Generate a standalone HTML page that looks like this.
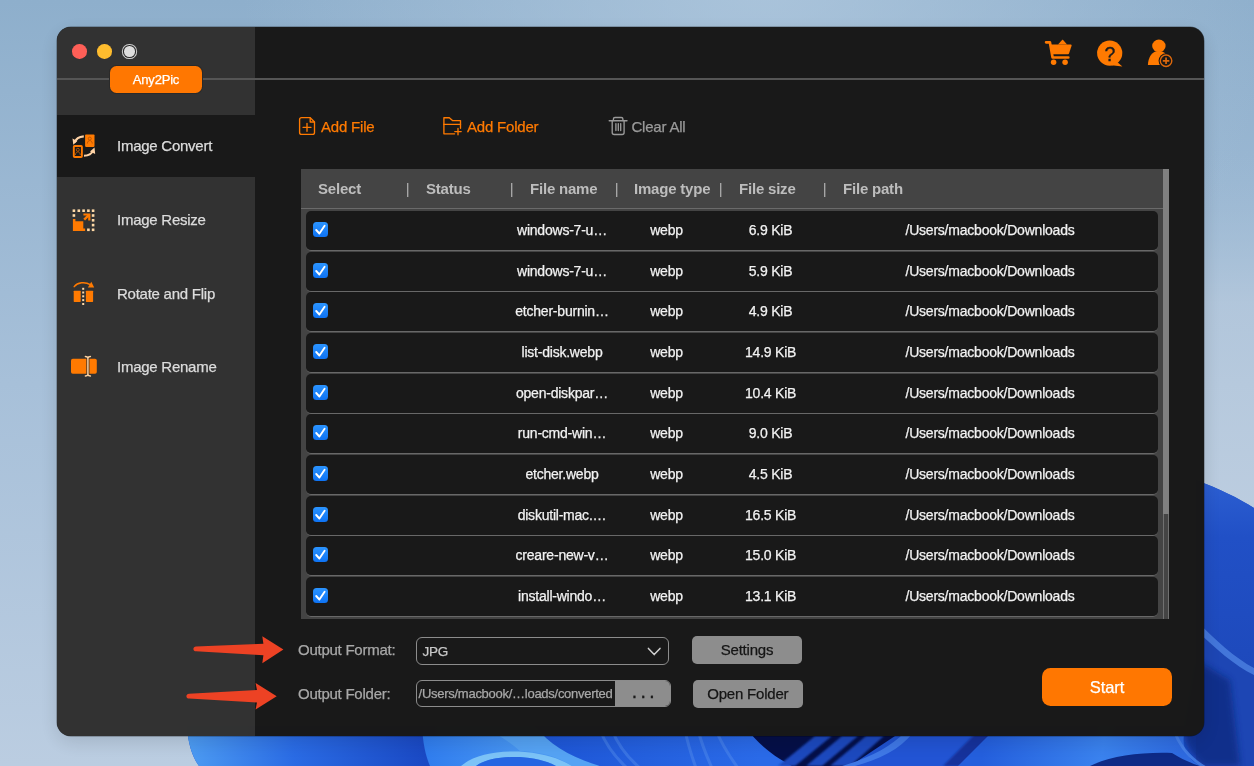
<!DOCTYPE html>
<html lang="en">
<head>
<meta charset="utf-8">
<title>Any2Pic</title>
<style>
*{box-sizing:border-box;margin:0;padding:0}
html,body{width:1254px;height:766px;overflow:hidden;background:#a9c1d9}
body{position:relative;font-family:"Liberation Sans","Helvetica Neue",Helvetica,Arial,sans-serif;color:#ddd;-webkit-font-smoothing:antialiased}
#win{-webkit-text-stroke:.25px}
#bg{position:absolute;left:0;top:0;width:1254px;height:766px}
#win{transform:translateZ(0);opacity:.9999;position:absolute;left:57px;top:27px;width:1147px;height:709px;border-radius:14px;background:#191919;overflow:hidden;box-shadow:0 6px 20px rgba(0,0,0,.13),0 0 0 .5px rgba(0,0,0,.45)}
#side{position:absolute;left:0;top:0;width:198px;height:709px;background:#323232}
#topline{position:absolute;left:0;top:51px;width:1147px;height:2px;background:#555}
.tl{position:absolute;top:17px;width:14.6px;height:14.6px;border-radius:50%}
#brand{position:absolute;left:53px;top:39px;width:92px;height:27px;border-radius:6.5px;background:#ff7700;box-shadow:0 0 0 1px #2a2a2a;color:#fff;font-size:13px;line-height:27px;text-align:center;letter-spacing:-.2px}
.nav{position:absolute;left:0;width:198px;height:62.4px}
.nav.sel{background:#191919}
.nav span{position:absolute;left:60px;top:.4px;line-height:62px;font-size:15px;color:#dcdcdc;letter-spacing:-.25px;white-space:nowrap}
.nav svg{position:absolute;left:15px;top:19px}
.tb{position:absolute;top:88px;height:24px;font-size:15px;line-height:24px;white-space:nowrap;letter-spacing:-.2px}
.tb svg{position:absolute;left:0;top:0}
.or{color:#ff7a00}
#table{position:absolute;left:244px;top:141.6px;width:868px;height:450.8px;background:#444}
#thead{position:absolute;left:0;top:0;width:862px;height:40px;background:#444;border-bottom:1.5px solid #6a6a6a}
#thead span{position:absolute;top:.5px;line-height:40px;font-size:15px;font-weight:bold;color:#bdbdbd;letter-spacing:-.2px;white-space:nowrap}
.row{position:absolute;left:5px;width:852px;height:40px;background:#191919;border-radius:5px;border-bottom:1.6px solid #686868;font-size:14px;color:#f2f2f2;line-height:38px;letter-spacing:-.22px}
#thead span{-webkit-text-stroke:0}
#thead span.sp{font-weight:normal;color:#b0b0b0;margin-left:.8px}
.row i{position:absolute;left:6.9px;top:10.9px;width:15px;height:15px;border-radius:3.5px;background:linear-gradient(#2b94ff,#0e73f4)}
.row i svg{position:absolute;left:0;top:0}
.row span{position:absolute;top:0;text-align:center;white-space:nowrap}
.c1{left:191px;width:130px}.c2{left:320.5px;width:80px}.c3{left:414.6px;width:100px}.c4{left:549px;width:270px}
#sbthumb{position:absolute;left:862px;top:0;width:6px;height:345px;background:#808080}
#sbtrack{position:absolute;left:862px;top:345px;width:6px;height:105.8px;background:#444;border-left:1px solid #707070;border-right:1px solid #707070}
.lbl{position:absolute;left:240.5px;font-size:15px;color:#a8a8a8;letter-spacing:-.25px;white-space:nowrap;line-height:20px}
.btn{position:absolute;height:27.5px;border-radius:5px;background:#8d8d8d;color:#151515;font-size:15px;line-height:27.3px;text-align:center;letter-spacing:-.2px}
.btn,#start,#brand,#dots,.tb,.lbl,#sel,#path{will-change:transform}
#sel{position:absolute;left:359.2px;top:610.2px;width:253px;height:28px;border:1.2px solid #8c8c8c;border-radius:6px;font-size:13.5px;color:#c8c8c8;line-height:27.4px;padding-left:5.6px;letter-spacing:-.3px}
#path{position:absolute;left:359.2px;top:653.2px;width:254.6px;height:26.8px;border:1.2px solid #8c8c8c;border-radius:6px;overflow:hidden;font-size:13px;color:#a8a8a8;line-height:25px;padding-left:1.6px;letter-spacing:-.27px;white-space:nowrap}
#dots{position:absolute;right:0;top:0;width:54.6px;height:25px;background:#8d8d8d;color:#1a1a1a;text-align:left;padding-left:17.5px;font-size:14px;line-height:24px;letter-spacing:4.9px;font-weight:bold}
#start{position:absolute;left:985px;top:641.4px;width:130px;height:38.4px;border-radius:8.5px;background:#ff7700;color:#fff;font-size:16.5px;line-height:38.4px;text-align:center;letter-spacing:-.1px}
</style>
</head>
<body>
<svg id="bg" viewBox="0 0 1254 766">
<defs>
<linearGradient id="sky" x1="0" y1="0" x2="0" y2="1"><stop offset="0" stop-color="#8eafcc"/><stop offset=".5" stop-color="#a7c0d9"/><stop offset="1" stop-color="#bbcde1"/></linearGradient>
<radialGradient id="glow" cx="760" cy="-40" r="520" gradientUnits="userSpaceOnUse"><stop offset="0" stop-color="#b4cbe0" stop-opacity=".75"/><stop offset="1" stop-color="#b4cbe0" stop-opacity="0"/></radialGradient>
<linearGradient id="rlight" x1="0" y1="0" x2="0" y2="1"><stop offset="0" stop-color="#9dbad4" stop-opacity="0"/><stop offset=".4" stop-color="#b8cadd" stop-opacity=".7"/><stop offset="1" stop-color="#bccde0"/></linearGradient>
<linearGradient id="p1" x1="187" y1="0" x2="425" y2="0" gradientUnits="userSpaceOnUse"><stop offset="0" stop-color="#4d9cf2"/><stop offset=".45" stop-color="#2a6be4"/><stop offset="1" stop-color="#1a49c4"/></linearGradient>
<linearGradient id="p2" x1="422" y1="0" x2="540" y2="0" gradientUnits="userSpaceOnUse"><stop offset="0" stop-color="#2f7cee"/><stop offset="1" stop-color="#4c9af3"/></linearGradient>
<linearGradient id="p3" x1="535" y1="0" x2="760" y2="0" gradientUnits="userSpaceOnUse"><stop offset="0" stop-color="#1d55d6"/><stop offset=".5" stop-color="#2460de"/><stop offset="1" stop-color="#2a6ae8"/></linearGradient>
<linearGradient id="p5" x1="985" y1="736" x2="1180" y2="766" gradientUnits="userSpaceOnUse"><stop offset="0" stop-color="#245fdd"/><stop offset=".6" stop-color="#3a82ee"/><stop offset="1" stop-color="#2e6ae0"/></linearGradient>
<linearGradient id="pr" x1="0" y1="480" x2="0" y2="766" gradientUnits="userSpaceOnUse"><stop offset="0" stop-color="#2c5fd2"/><stop offset=".2" stop-color="#2150c6"/><stop offset="1" stop-color="#1b44b4"/></linearGradient>
<filter id="b1" x="-5%" y="-5%" width="110%" height="110%"><feGaussianBlur stdDeviation="1"/></filter><filter id="b2" x="-10%" y="-10%" width="120%" height="120%"><feGaussianBlur stdDeviation="3"/></filter>
</defs>
<rect width="1254" height="766" fill="url(#sky)"/>
<rect width="1254" height="766" fill="url(#glow)"/>
<rect x="1190" y="150" width="64" height="380" fill="url(#rlight)"/>
<!-- bloom base -->
<path d="M187 726 C188 745 193 758 199 766 L1254 766 L1254 508 C1238 498 1220 489 1196 480 L1196 726 Z" fill="#1f52cf"/>
<!-- right side petals -->
<path d="M1196 480 C1220 489 1238 498 1254 508 L1254 766 L1196 766 Z" fill="url(#pr)"/>
<path d="M1196 620 C1215 640 1235 658 1254 668 L1254 766 L1196 766 Z" fill="#1d46b4"/>
<path d="M1196 620 C1215 640 1235 658 1254 668 L1254 675 C1235 666 1215 648 1196 630 Z" fill="#4a7fe0" opacity=".85"/>
<path d="M1196 660 L1230 680 L1240 766 L1204 766 C1192 758 1184 746 1184 730 Z" fill="#0f2982" opacity=".8" filter="url(#b2)"/>
<!-- bottom petals -->
<path d="M187 726 C188 745 193 758 199 766 L430 766 L422 726 Z" fill="url(#p1)"/>
<path d="M422 726 C423 745 426 757 430 766 L600 766 L535 726 Z" fill="url(#p2)"/>
<path d="M461 766 C475 754 500 750 525 752 C548 754 562 760 572 766 L556 766 C545 760 530 757 515 757 C498 757 484 760 476 766 Z" fill="#7cc3f7"/>
<path d="M476 766 C484 760 498 757 515 757 C530 757 545 760 556 766 Z" fill="#2566e2"/>
<path d="M478 726 L535 726 C550 745 570 757 600 766 L572 766 C560 758 545 752 520 751 C505 738 490 730 478 726 Z" fill="#5aa6f4" opacity=".7"/>
<path d="M535 726 L762 726 C770 745 780 757 792 766 L600 766 C570 757 550 745 535 726 Z" fill="url(#p3)"/>
<g stroke="#5b93ee" stroke-width="3" fill="none" opacity=".4">
<path d="M600 730 C606 745 615 757 627 768"/><path d="M612 730 C618 745 627 757 640 768"/>
<path d="M685 730 C688 745 692 757 696 768"/><path d="M698 730 C702 745 707 757 712 768"/><path d="M716 730 C722 745 730 757 738 768"/>
</g>
<path d="M745 726 L910 726 L850 766 L792 766 C775 757 758 745 745 726 Z" fill="#050f48"/>
<g fill="#1d49be" filter="url(#b1)">
<path d="M815 736 L832 736 L795 766 L778 766 Z"/><path d="M842 736 L858 736 L822 766 L806 766 Z"/><path d="M866 736 L884 736 L850 766 L830 766 Z"/>
</g>
<path d="M905 732 L925 732 C905 750 880 760 850 768 L835 768 C865 760 890 748 905 732 Z" fill="#3f78e6"/>
<path d="M918 726 L990 726 L945 766 L855 766 C885 758 905 746 918 726 Z" fill="#2254d4"/>
<path d="M983 726 L1000 726 L962 766 L943 766 Z" fill="#15329c" filter="url(#b1)"/>
<path d="M998 726 L1186 726 C1180 745 1185 757 1200 766 L958 766 Z" fill="url(#p5)"/>
<path d="M1090 766 C1110 756 1140 752 1172 753 C1180 758 1190 763 1200 766 Z" fill="#0e2a86"/>
<path d="M1174 730 C1180 748 1192 760 1206 768" fill="none" stroke="#4a84ea" stroke-width="3" opacity=".8"/>
</svg>
<div id="win">
 <div id="side"></div>
 <div id="topline"></div>
 <div class="tl" style="left:15.3px;background:#fe5f57"></div>
 <div class="tl" style="left:40.2px;background:#febc2e"></div>
 <div class="tl" style="background:#dedede;box-shadow:0 0 0 1.1px #2a2a2a,0 0 0 2.1px #cfcfcf;width:10.6px;height:10.6px;top:19px;left:67.3px"></div>
 <div id="brand">Any2Pic</div>

 <div class="nav sel" style="top:88px"><span>Image Convert</span></div>
 <div class="nav" style="top:161.5px"><span>Image Resize</span></div>
 <div class="nav" style="top:235.2px"><span>Rotate and Flip</span></div>
 <div class="nav" style="top:308.7px"><span>Image Rename</span></div>

 <div class="tb or" style="left:242px;padding-left:22px">Add File</div>
 <div class="tb or" style="left:386px;padding-left:24px">Add Folder</div>
 <div class="tb" style="left:552px;padding-left:22.4px;color:#9a9a9a">Clear All</div>

 <div id="table">
  <div id="thead">
   <span style="left:17px">Select</span><span class="sp" style="left:104px">|</span>
   <span style="left:125px">Status</span><span class="sp" style="left:208px">|</span>
   <span style="left:229px">File name</span><span class="sp" style="left:313px">|</span>
   <span style="left:333px">Image type</span><span class="sp" style="left:417px">|</span>
   <span style="left:438px">File size</span><span class="sp" style="left:521px">|</span>
   <span style="left:542px">File path</span>
  </div>
  <div class="row" style="top:42.40px"><i><svg width="15" height="15" viewBox="0 0 15 15"><path d="M3.2 8 L6.4 11.5 L11.6 3.7" fill="none" stroke="#fff" stroke-width="1.9" stroke-linecap="round" stroke-linejoin="round"/></svg></i><span class="c1">windows-7-u…</span><span class="c2">webp</span><span class="c3">6.9 KiB</span><span class="c4">/Users/macbook/Downloads</span></div>
  <div class="row" style="top:83.08px"><i><svg width="15" height="15" viewBox="0 0 15 15"><path d="M3.2 8 L6.4 11.5 L11.6 3.7" fill="none" stroke="#fff" stroke-width="1.9" stroke-linecap="round" stroke-linejoin="round"/></svg></i><span class="c1">windows-7-u…</span><span class="c2">webp</span><span class="c3">5.9 KiB</span><span class="c4">/Users/macbook/Downloads</span></div>
  <div class="row" style="top:123.76px"><i><svg width="15" height="15" viewBox="0 0 15 15"><path d="M3.2 8 L6.4 11.5 L11.6 3.7" fill="none" stroke="#fff" stroke-width="1.9" stroke-linecap="round" stroke-linejoin="round"/></svg></i><span class="c1">etcher-burnin…</span><span class="c2">webp</span><span class="c3">4.9 KiB</span><span class="c4">/Users/macbook/Downloads</span></div>
  <div class="row" style="top:164.44px"><i><svg width="15" height="15" viewBox="0 0 15 15"><path d="M3.2 8 L6.4 11.5 L11.6 3.7" fill="none" stroke="#fff" stroke-width="1.9" stroke-linecap="round" stroke-linejoin="round"/></svg></i><span class="c1">list-disk.webp</span><span class="c2">webp</span><span class="c3">14.9 KiB</span><span class="c4">/Users/macbook/Downloads</span></div>
  <div class="row" style="top:205.12px"><i><svg width="15" height="15" viewBox="0 0 15 15"><path d="M3.2 8 L6.4 11.5 L11.6 3.7" fill="none" stroke="#fff" stroke-width="1.9" stroke-linecap="round" stroke-linejoin="round"/></svg></i><span class="c1">open-diskpar…</span><span class="c2">webp</span><span class="c3">10.4 KiB</span><span class="c4">/Users/macbook/Downloads</span></div>
  <div class="row" style="top:245.80px"><i><svg width="15" height="15" viewBox="0 0 15 15"><path d="M3.2 8 L6.4 11.5 L11.6 3.7" fill="none" stroke="#fff" stroke-width="1.9" stroke-linecap="round" stroke-linejoin="round"/></svg></i><span class="c1">run-cmd-win…</span><span class="c2">webp</span><span class="c3">9.0 KiB</span><span class="c4">/Users/macbook/Downloads</span></div>
  <div class="row" style="top:286.48px"><i><svg width="15" height="15" viewBox="0 0 15 15"><path d="M3.2 8 L6.4 11.5 L11.6 3.7" fill="none" stroke="#fff" stroke-width="1.9" stroke-linecap="round" stroke-linejoin="round"/></svg></i><span class="c1">etcher.webp</span><span class="c2">webp</span><span class="c3">4.5 KiB</span><span class="c4">/Users/macbook/Downloads</span></div>
  <div class="row" style="top:327.16px"><i><svg width="15" height="15" viewBox="0 0 15 15"><path d="M3.2 8 L6.4 11.5 L11.6 3.7" fill="none" stroke="#fff" stroke-width="1.9" stroke-linecap="round" stroke-linejoin="round"/></svg></i><span class="c1">diskutil-mac.…</span><span class="c2">webp</span><span class="c3">16.5 KiB</span><span class="c4">/Users/macbook/Downloads</span></div>
  <div class="row" style="top:367.84px"><i><svg width="15" height="15" viewBox="0 0 15 15"><path d="M3.2 8 L6.4 11.5 L11.6 3.7" fill="none" stroke="#fff" stroke-width="1.9" stroke-linecap="round" stroke-linejoin="round"/></svg></i><span class="c1">creare-new-v…</span><span class="c2">webp</span><span class="c3">15.0 KiB</span><span class="c4">/Users/macbook/Downloads</span></div>
  <div class="row" style="top:408.52px"><i><svg width="15" height="15" viewBox="0 0 15 15"><path d="M3.2 8 L6.4 11.5 L11.6 3.7" fill="none" stroke="#fff" stroke-width="1.9" stroke-linecap="round" stroke-linejoin="round"/></svg></i><span class="c1">install-windo…</span><span class="c2">webp</span><span class="c3">13.1 KiB</span><span class="c4">/Users/macbook/Downloads</span></div>
  <div id="sbthumb"></div><div id="sbtrack"></div>
 </div>

 <div class="lbl" style="top:613px">Output Format:</div>
 <div class="lbl" style="top:657.4px">Output Folder:</div>
 <div id="sel">JPG</div>
 <div class="btn" style="left:634.6px;top:609px;width:110px">Settings</div>
 <div id="path">/Users/macbook/…loads/converted<div id="dots">...</div></div>
 <div class="btn" style="left:635.6px;top:653.4px;width:109.6px">Open Folder</div>
 <div id="start">Start</div>

<svg id="ico" width="1147" height="709" viewBox="57 27 1147 709" style="position:absolute;left:0;top:0;pointer-events:none">
<!-- Image Convert -->
<g>
 <rect x="85.1" y="134.4" width="9.4" height="12.5" rx=".8" fill="#ff7a00"/>
 <g fill="none" stroke="#b85400" stroke-width=".9"><circle cx="89.8" cy="138.6" r="1.5"/><path d="M87.3 143.6 C87.6 141.3 88.6 140.6 89.8 140.6 C91 140.6 92 141.3 92.3 143.6"/></g>
 <rect x="73.8" y="146" width="8.1" height="11" rx=".8" fill="none" stroke="#ff7a00" stroke-width="1.9"/>
 <g fill="none" stroke="#c05a00" stroke-width=".9"><circle cx="77.8" cy="149.8" r="1.5"/><path d="M75.4 155 C75.7 152.6 76.7 151.9 77.8 151.9 C79 151.9 80 152.6 80.3 155"/></g>
 <path d="M83.8 136.4 C78.8 136.8 75.8 139 74.8 142.4" fill="none" stroke="#ffd3a6" stroke-width="2.1"/>
 <path d="M72.5 138.4 L77.3 140.9 L73.3 144.8 Z" fill="#ffd3a6"/>
 <path d="M84 155.8 C88.8 155.6 91.8 153.5 93 150.6" fill="none" stroke="#ffd3a6" stroke-width="2.1"/>
 <path d="M94.5 147.6 L95.2 153.9 L90 151.6 Z" fill="#ffd3a6"/>
</g>
<!-- Image Resize -->
<g fill="#ffd9a6">
 <rect x="72.6" y="209.4" width="2.6" height="2.6"/><rect x="77.5" y="209.4" width="2.6" height="2.6"/><rect x="82.3" y="209.4" width="2.6" height="2.6"/><rect x="87.1" y="209.4" width="2.6" height="2.6"/><rect x="91.8" y="209.4" width="2.6" height="2.6"/>
 <rect x="72.6" y="214.2" width="2.6" height="2.6"/>
 <rect x="91.8" y="214.2" width="2.6" height="2.6"/><rect x="91.8" y="219" width="2.6" height="2.6"/><rect x="91.8" y="223.8" width="2.6" height="2.6"/><rect x="91.8" y="228.5" width="2.6" height="2.6"/>
 <rect x="87.1" y="228.5" width="2.6" height="2.6"/>
</g>
<path d="M72.9 219.1 L75.4 219.1 L75.4 221.2 L83.3 221.2 L83.3 228.4 L85.1 228.4 L85.1 231.1 L72.9 231.1 Z" fill="#ff7a00"/>
<path d="M84.2 219.7 L89 214.9" stroke="#ff7a00" stroke-width="2.4" fill="none"/>
<path d="M83.4 214.5 H89.3 V220.6" stroke="#ff7a00" stroke-width="2.2" fill="none"/>
<!-- Rotate and Flip -->
<rect x="73.7" y="290.7" width="7" height="11.2" rx=".6" fill="#ff7a00"/>
<rect x="85.9" y="290.7" width="7.2" height="11.2" rx=".6" fill="#ff7a00"/>
<g fill="#ffd9a6"><rect x="82.2" y="287.8" width="2" height="2"/><rect x="82.2" y="291.5" width="2" height="2"/><rect x="82.2" y="295.3" width="2" height="2"/><rect x="82.2" y="299.1" width="2" height="2"/><rect x="82.2" y="303" width="2" height="2"/></g>
<path d="M74.2 286.6 C77.5 282.4 85 281.4 90.3 284.6" fill="none" stroke="#ff7a00" stroke-width="1.5" stroke-linecap="round"/>
<path d="M91.3 281.8 L94.2 287.6 L87.9 287.4 Z" fill="#ff7a00"/>
<!-- Image Rename -->
<rect x="71" y="358.8" width="25.8" height="14.9" rx="1.8" fill="#ff7a00"/>
<rect x="86.4" y="357.5" width="3" height="17.5" fill="#2b2b2b"/>
<path d="M85.4 356.6 C86.7 356.7 87.5 357.1 87.9 358 C88.3 357.1 89.1 356.7 90.4 356.6 M85.4 376 C86.7 375.9 87.5 375.5 87.9 374.6 C88.3 375.5 89.1 375.9 90.4 376 M87.9 357.6 L87.9 375" fill="none" stroke="#ffd2a0" stroke-width="1.5" stroke-linecap="round"/>

<!-- cart -->
<g fill="#ff7a00">
 <path d="M1046.1 42.3 L1049.9 42.3 L1052.6 57.5 L1068.3 57.5" fill="none" stroke="#ff7a00" stroke-width="2.7" stroke-linecap="round" stroke-linejoin="round"/>
 <path d="M1049.6 44.4 L1070.6 44.4 C1071.4 44.4 1071.8 45 1071.6 45.7 L1069 53.4 C1068.8 53.9 1068.5 54.2 1068 54.2 L1051.6 54.2 Z"/>
 <path d="M1058 44.5 L1062.1 40 C1062.4 39.7 1062.8 39.7 1063.1 40 L1067.1 44.5 Z"/>
 <circle cx="1053.6" cy="62.3" r="2.75"/><circle cx="1065.1" cy="62.3" r="2.75"/>
</g>
<!-- help -->
<circle cx="1109.7" cy="53.1" r="12.6" fill="#ff7a00"/>
<path d="M1116 61 L1122.4 66.4 L1111.5 65.3 Z" fill="#ff7a00"/>
<text x="1109.9" y="61.2" font-family="Liberation Sans,sans-serif" font-size="19.5" text-anchor="middle" fill="#1c1c1c" stroke="#1c1c1c" stroke-width=".35">?</text>
<!-- user -->
<ellipse cx="1158.9" cy="45.9" rx="6.7" ry="6.3" fill="#ff7a00"/>
<path d="M1147.9 65 C1148.2 57.6 1151.4 53.4 1155.4 51.6 L1162.2 51.6 C1165.6 53 1167.8 56 1168.6 60 L1168.6 65 Z" fill="#ff7a00"/>
<circle cx="1166.05" cy="60.8" r="7.5" fill="#191919"/>
<circle cx="1166.05" cy="60.8" r="5.75" fill="#191919" stroke="#dd680c" stroke-width="1.4"/>
<path d="M1162.8 60.8 H1169.3 M1166.05 57.55 V64.05" stroke="#dd680c" stroke-width="1.7" fill="none"/>
<!-- add file -->
<g fill="none" stroke="#ff7a00" stroke-width="1.35" stroke-linejoin="round" stroke-linecap="round">
 <path d="M301.6 117.6 L310.2 117.6 L314.5 122 L314.5 132.4 C314.5 133.6 313.7 134.4 312.5 134.4 L301.6 134.4 C300.4 134.4 299.6 133.6 299.6 132.4 L299.6 119.6 C299.6 118.4 300.4 117.6 301.6 117.6 Z"/>
 <path d="M310.2 117.8 L310.2 122 L314.3 122"/>
 <path d="M303 127.3 H311 M307 123.3 V131.3"/>
</g>
<!-- add folder -->
<g fill="none" stroke="#ff7a00" stroke-width="1.35" stroke-linejoin="round" stroke-linecap="round">
 <path d="M454.6 133.8 L443.9 133.8 L443.9 117.7 L449.3 117.7 L452.5 120.6 L460.5 120.6 L460.5 128.2"/>
 <path d="M443.9 124.4 H460.5"/>
 <path d="M454.8 131.6 H461.2 M458 128.4 V134.8"/>
</g>
<!-- trash -->
<g fill="none" stroke="#9a9a9a" stroke-width="1.35" stroke-linejoin="round" stroke-linecap="round">
 <path d="M609.2 120.7 H627"/>
 <path d="M613.4 120.5 L613.4 119 C613.4 118 614.1 117.5 615 117.5 L621.3 117.5 C622.2 117.5 622.9 118 622.9 119 L622.9 120.5"/>
 <path d="M612.2 121 L612.2 132.6 C612.2 133.8 613 134.5 614.2 134.5 L622.1 134.5 C623.3 134.5 624.1 133.8 624.1 132.6 L624.1 121"/>
 <path d="M615.9 123.6 V130.6 M618.3 123.6 V130.6 M620.7 123.6 V130.6"/>
</g>
<!-- chevron -->
<path d="M648.4 648.4 L654.2 654.6 L660 648.4" fill="none" stroke="#d0d0d0" stroke-width="1.5" stroke-linecap="round" stroke-linejoin="round"/>
<!-- red arrows -->
<g fill="#ed4224">
 <path d="M193.4 648.9 C193.4 647.4 194.6 646.6 196 646.5 L263.4 643.8 L262.3 636.2 L283.4 649.6 L262.3 663.2 L263.4 655.2 L196 651.3 C194.6 651.2 193.4 650.4 193.4 648.9 Z"/>
 <path d="M186.4 696.2 C186.4 694.7 187.6 693.9 189 693.8 L257 689.9 L255.6 683.1 L276.7 696.2 L255.6 709.5 L257 702.5 L189 698.6 C187.6 698.5 186.4 697.7 186.4 696.2 Z"/>
</g>
</svg>
</div>
</body>
</html>
